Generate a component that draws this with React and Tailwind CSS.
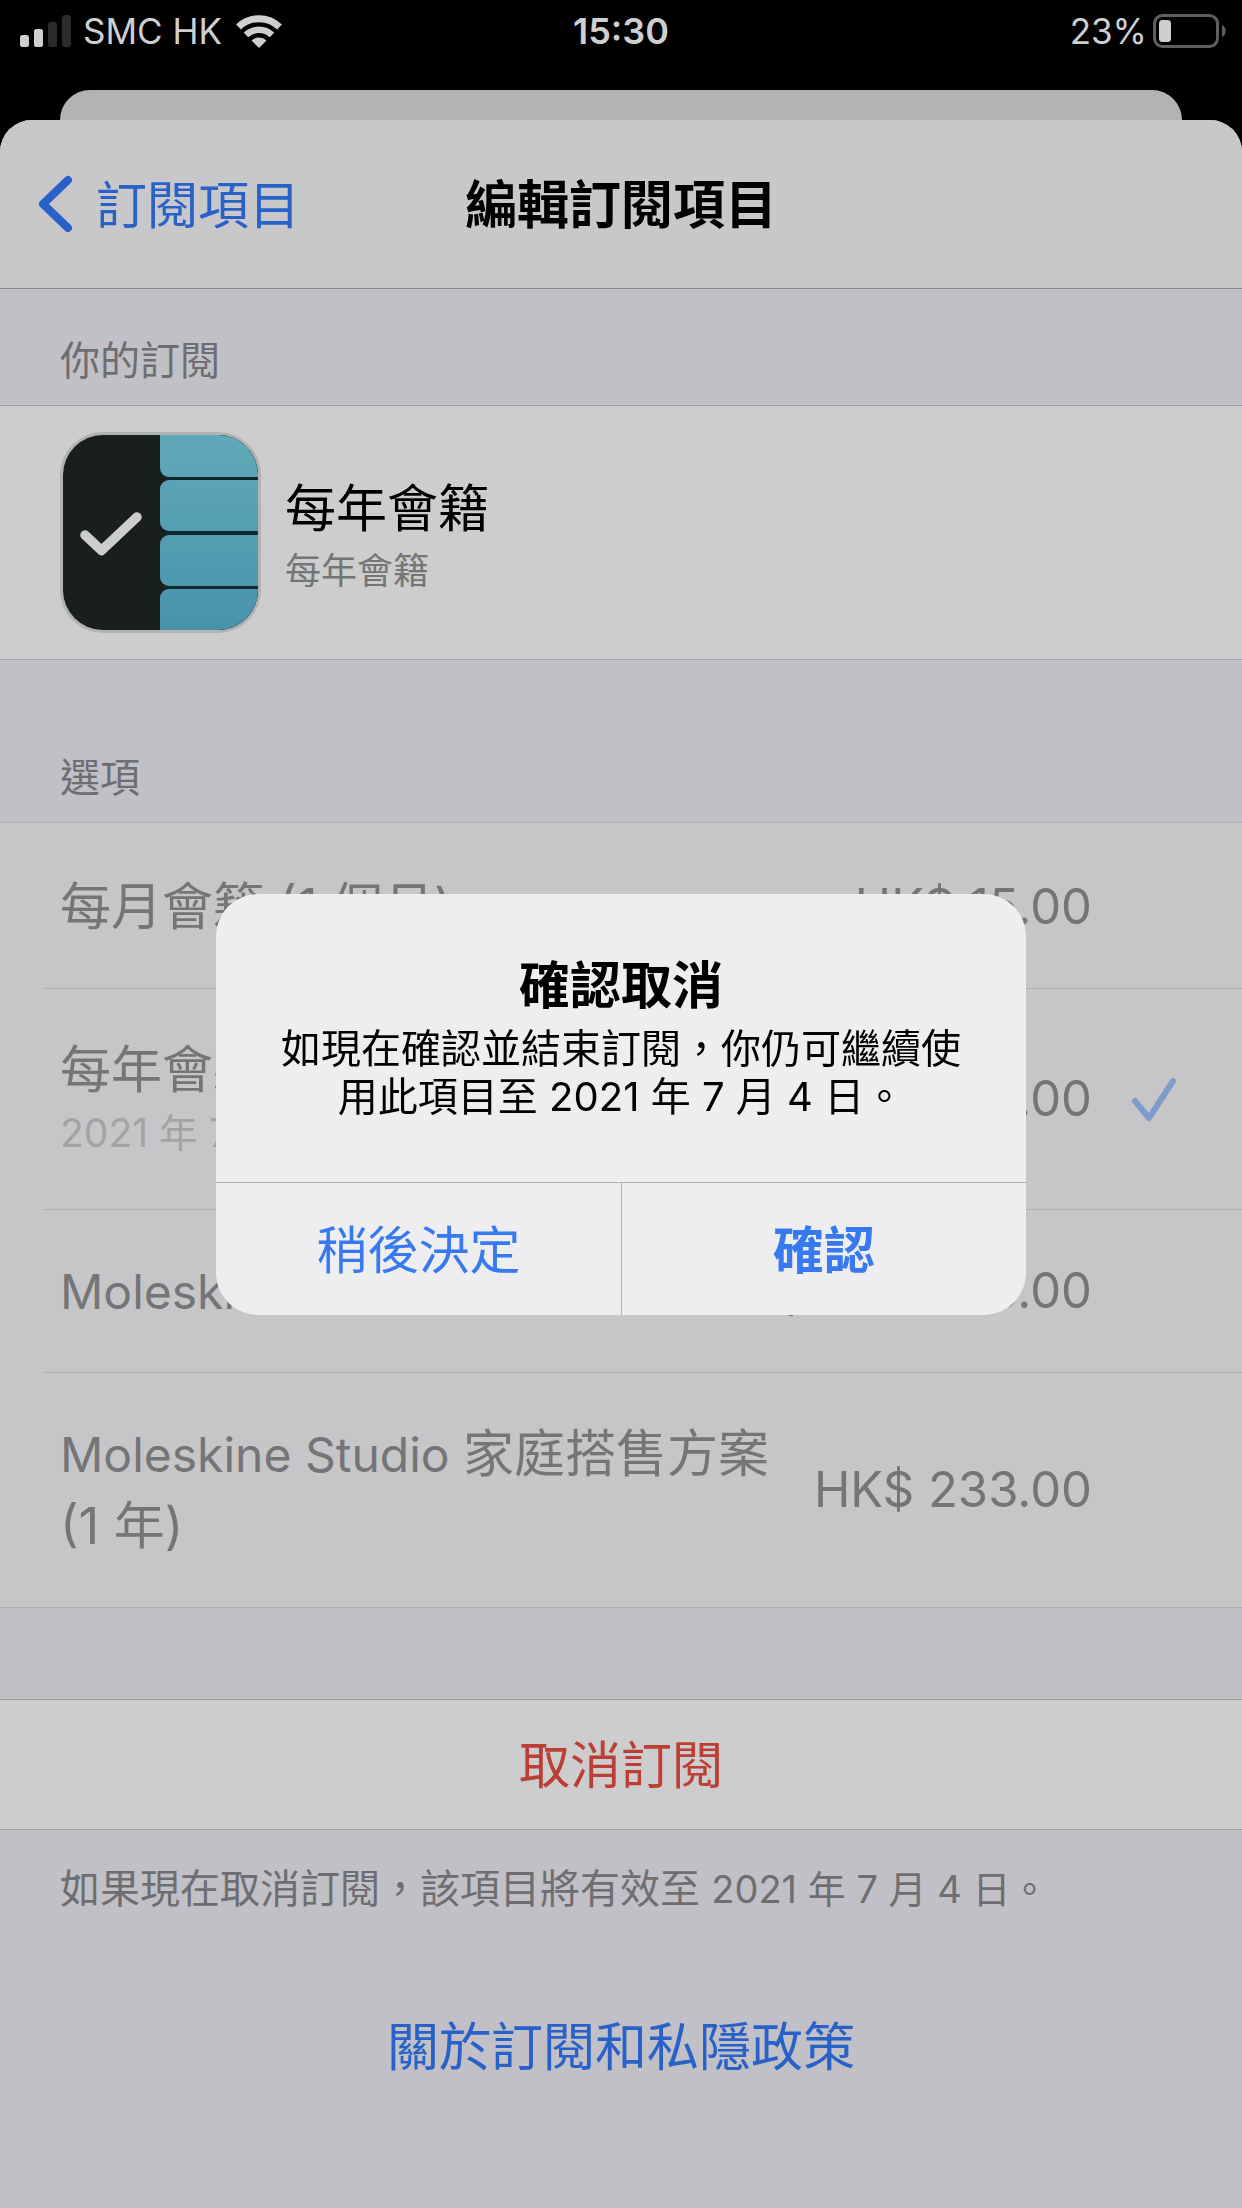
import React, { useState } from 'react';

const options = [
  { id: 'monthly', name: '每月會籍 (1 個月)', price: 'HK$ 15.00' },
  { id: 'yearly', name: '每年會籍 (1 年)', note: '2021 年 7 月 4 日', price: 'HK$ 93.00' },
  { id: 'studio', brand: 'Moleskine Studio', name: '搭售方案 (1 年)', price: 'HK$ 158.00' },
  { id: 'family', brand: 'Moleskine Studio', name: '家庭搭售方案 (1 年)', price: 'HK$ 233.00' },
];

function StatusBar() {
  return (
    <div className="grid h-[90px] grid-cols-3 items-start px-5 pt-2 text-[35px] leading-[46px] text-[#cfcfcf]">
      <div className="flex items-center">
        <svg className="h-8 w-[51px]" viewBox="0 0 51 32" fill="currentColor">
          <rect x="0" y="20" width="9" height="12" rx="2.5" />
          <rect x="14" y="14" width="9" height="18" rx="2.5" />
          <rect x="28" y="7" width="9" height="25" rx="2.5" fill="#2b2b2b" />
          <rect x="42" y="0" width="9" height="32" rx="2.5" fill="#2b2b2b" />
        </svg>
        <span className="ml-3">SMC HK</span>
        <svg className="ml-[14px] h-[33px] w-[46px]" viewBox="0 0 46 33" fill="none" stroke="currentColor">
          <path d="M2.5 12a29.5 29.5 0 0 1 41 0" strokeWidth="7" />
          <path d="M10 20a19 19 0 0 1 26 0" strokeWidth="6.5" />
          <path d="M23 33 15.500 25.500a11 11 0 0 1 15 0z" fill="currentColor" stroke="none" />
        </svg>
      </div>
      <div className="text-center text-[36px] font-semibold">15:30</div>
      <div className="flex items-center justify-end">
        <span>23%</span>
        <svg className="ml-[6px] -mr-1 h-[34px] w-[73px]" viewBox="0 0 73 34">
          <rect x="1.500" y="1.500" width="63" height="31" rx="8" fill="none" stroke="#5f5f5f" strokeWidth="3" />
          <rect x="6" y="6" width="12" height="22" rx="3.500" fill="#cfcfcf" />
          <path d="M69 11c5 2 5 10 0 12z" fill="#5f5f5f" />
        </svg>
      </div>
    </div>
  );
}

function AppIcon() {
  return (
    <svg className="size-[201px] shrink-0" viewBox="0 0 201 201">
      <defs>
        <linearGradient id="tabs" gradientUnits="userSpaceOnUse" x1="0" y1="0" x2="0" y2="201">
          <stop offset="0" stopColor="#61a9b8" />
          <stop offset="1" stopColor="#4893ab" />
        </linearGradient>
        <clipPath id="frame">
          <rect x="3" y="3" width="195" height="195" rx="40" />
        </clipPath>
      </defs>
      <rect width="201" height="201" rx="43" fill="#b2b2b2" />
      <g clipPath="url(#frame)">
        <rect width="201" height="201" fill="#191e1e" />
        <rect x="105" y="3" width="96" height="195" fill="#10272e" />
        <g fill="url(#tabs)">
          <rect x="100" y="-12" width="120" height="57" rx="9" />
          <rect x="100" y="48" width="120" height="51" rx="9" />
          <rect x="100" y="103" width="120" height="51" rx="9" />
          <rect x="100" y="157" width="120" height="60" rx="9" />
        </g>
      </g>
      <path d="M25 103l16.500 15.500L77 85" fill="none" stroke="#cdcdcd" strokeWidth="9.500" strokeLinecap="round" strokeLinejoin="round" />
    </svg>
  );
}

function OptionRow({ option, selected, last }) {
  return (
    <li className="group pl-[44px]">
      <button
        disabled
        className="flex w-full items-center border-t border-[#b0b0b3] py-[45px] pr-[60px] pl-4 text-left text-[#757578] group-first:border-t-0 group-first:pt-[48px]"
      >
        <span className="min-w-0 flex-1">
          <span className={`block text-[51px] leading-[72px] ${last ? '' : 'whitespace-nowrap'}`}>
            {option.brand && <span className="text-[48px] leading-none">{option.brand} </span>}
            {option.name}
          </span>
          {option.note && (
            <span className="mb-1 block text-[39px] leading-[54px] text-[#a3a3a6]">{option.note}</span>
          )}
        </span>
        <span className="ml-6 shrink-0 text-[49px] leading-[72px]">{option.price}</span>
        <span className="flex w-[90px] shrink-0 justify-end">
          {selected && (
            <svg className="h-[45px] w-[50px]" viewBox="0 0 50 45" fill="none" stroke="#7e9cc9" strokeWidth="6" strokeLinecap="round" strokeLinejoin="round">
              <path d="M3 24l14 17L41 4" />
            </svg>
          )}
        </span>
      </button>
    </li>
  );
}

function ConfirmDialog({ onClose }) {
  return (
    <div className="fixed inset-0 flex items-center justify-center">
      <div role="alertdialog" aria-labelledby="dialog-title" aria-describedby="dialog-text" className="w-[810px] overflow-hidden rounded-[42px] bg-[#eeeef0] text-black">
        <div className="px-[60px] pt-[60px] pb-[61px] text-center">
          <h2 id="dialog-title" className="text-[51px] leading-[64px] font-semibold">確認取消</h2>
          <p id="dialog-text" className="mt-[7px] text-[40px] leading-[48px]">
            如現在確認並結束訂閱，你仍可繼續使用此項目至 2021 年 7 月 4 日。
          </p>
        </div>
        <div className="grid grid-cols-2 border-t border-[#b1b1b4] text-[51px] leading-[128px] text-[#3779f0]">
          <button onClick={onClose} className="pt-1">稍後決定</button>
          <button onClick={onClose} className="border-l border-[#b1b1b4] pt-1 font-semibold">確認</button>
        </div>
      </div>
    </div>
  );
}

export default function App() {
  const [confirming, setConfirming] = useState(true);

  return (
    <div lang="zh-Hant-HK" className="flex min-h-screen flex-col bg-black font-[Inter,'Noto_Sans_CJK_TC',sans-serif]">
      <StatusBar />
      {/* edge of the sheet underneath */}
      <div className="mx-[60px] h-[30px] rounded-t-[30px] bg-[#b3b3b3]" />

      <div className="flex-1 overflow-hidden rounded-t-[32px] bg-[#c1c0c6]">
        <header className="grid h-[169px] grid-cols-[1fr_auto_1fr] items-center border-b border-[#86868b] bg-[#c8c8ca] px-9 leading-[72px]">
          <button className="flex items-center text-[51px] text-[#2862c8]">
            <svg className="h-[58px] w-[38px]" viewBox="0 0 38 58" fill="none" stroke="currentColor" strokeWidth="8" strokeLinecap="round" strokeLinejoin="round">
              <path d="M32 5 7 29l25 24" />
            </svg>
            <span className="ml-[22px] pt-1">訂閱項目</span>
          </button>
          <h1 className="pt-1 text-[52px] font-semibold text-black">編輯訂閱項目</h1>
        </header>

        <h2 className="px-[60px] pt-[46px] pb-[18px] text-[40px] leading-[52px] text-[#6e6e72]">你的訂閱</h2>
        <div className="flex items-center border-y border-[#a0a0a3] bg-[#cdcdcd] px-[60px] py-[26px]">
          <AppIcon />
          <div className="ml-6 pt-1">
            <div className="text-[51px] leading-[72px] text-black">每年會籍</div>
            <div className="text-[36px] leading-[52px] text-[#757578]">每年會籍</div>
          </div>
        </div>

        <h2 className="px-[60px] pt-[92px] pb-[18px] text-[40px] leading-[52px] text-[#6e6e72]">選項</h2>
        <ul className="border-y border-[#b0b0b3] bg-[#c6c6c8]">
          {options.map((option, i) => (
            <OptionRow key={option.id} option={option} selected={option.id === 'yearly'} last={i === options.length - 1} />
          ))}
        </ul>

        <button
          onClick={() => setConfirming(true)}
          className="mt-[91px] w-full border-y border-[#a0a0a3] bg-[#cdcdcd] pt-[30px] pb-[27px] text-center text-[51px] leading-[72px] text-[#bb3f34]"
        >
          取消訂閱
        </button>
        <p className="px-[60px] pt-[33px] text-[40px] leading-[52px] text-[#6e6e72]">
          如果現在取消訂閱，該項目將有效至 <span className="text-[38px] leading-none">2021 年 7 月 4 日。</span>
        </p>
        <div className="mt-[97px] text-center text-[52px] leading-[72px]">
          <a href="#privacy" className="text-[#2862c8]">關於訂閱和私隱政策</a>
        </div>
      </div>

      {confirming && <ConfirmDialog onClose={() => setConfirming(false)} />}
    </div>
  );
}
